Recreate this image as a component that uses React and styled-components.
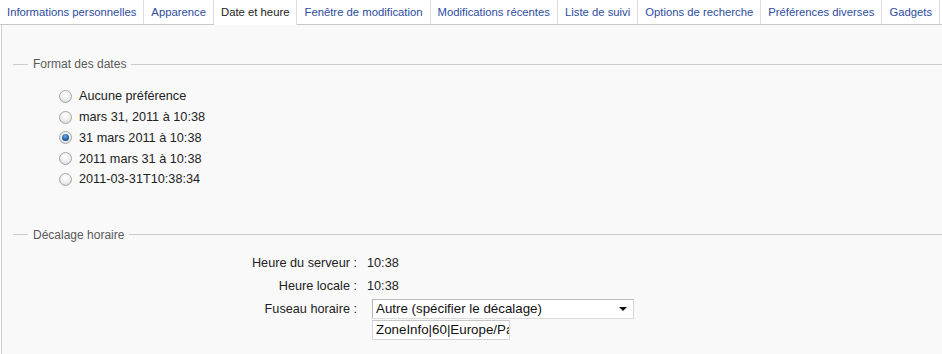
import React from "react";
import styled, { createGlobalStyle } from "styled-components";

const Global = createGlobalStyle`
  html, body { margin: 0; padding: 0; background: #ffffff; }
  body { font-family: "Liberation Sans", Arial, sans-serif; font-size: 12.7px; color: #222; }
`;

const Page = styled.div`
  width: 942px;
  height: 354px;
  overflow: hidden;
  display: flex;
  flex-direction: column;
`;

const TabBar = styled.ul`
  list-style: none;
  margin: 0;
  padding: 0;
  display: flex;
  height: 24px;
  border-bottom: 1px solid #c8c8c8;
  white-space: nowrap;
`;

const Tab = styled.li`
  height: ${(p) => (p.$active ? "25px" : "24px")};
  margin-bottom: ${(p) => (p.$active ? "-1px" : "0")};
  padding: 0 7px ${(p) => (p.$active ? "1px" : "0")};
  display: flex;
  align-items: center;
  background: #ffffff;
  border-right: 1px solid #dcdcdc;
  color: ${(p) => (p.$active ? "#222222" : "#2d4c9e")};
  font-size: 11.3px;
  flex-shrink: 0;
  box-sizing: border-box;
`;

const Panel = styled.div`
  flex: 1;
  margin-left: 1px;
  border-left: 1px solid #cfcfcf;
  background: #f9f9f9;
  padding-top: 32px;
`;

const Legend = styled.div`
  display: flex;
  align-items: center;
  height: 14px;
  color: #5a5a5a;
  font-size: 12px;
  &::before {
    content: "";
    width: 15px;
    margin-left: 11px;
    margin-right: 5px;
    border-top: 1px solid #cccccc;
  }
  &::after {
    content: "";
    flex: 1;
    margin-left: 5px;
    margin-right: -20px;
    border-top: 1px solid #cccccc;
  }
`;

const RadioList = styled.div`
  margin: 15px 0 38px 57px;
  display: flex;
  flex-direction: column;
`;

const RadioRow = styled.label`
  height: 20.75px;
  display: flex;
  align-items: center;
  gap: 7px;
  color: #222;
`;

const RadioDot = styled.span`
  width: 13px;
  height: 13px;
  box-sizing: border-box;
  border-radius: 50%;
  border: 1px solid #a6a6a6;
  background: radial-gradient(circle at 50% 35%, #ffffff 0%, #f1f1f1 45%, #d2d2d2 100%);
  display: flex;
  align-items: center;
  justify-content: center;
  &::after {
    content: "";
    display: ${(p) => (p.$checked ? "block" : "none")};
    width: 7px;
    height: 7px;
    border-radius: 50%;
    background: radial-gradient(circle at 45% 35%, #7fb3e6 0%, #2a6bb3 45%, #0f3a6e 100%);
  }
`;

const OffsetGrid = styled.div`
  margin-top: 9px;
  display: grid;
  grid-template-columns: 355px 280px;
  grid-template-rows: 23.5px 23.5px auto;
  column-gap: 10px;
  align-items: center;
`;

const Label = styled.div`
  text-align: right;
  color: #222;
`;

const Value = styled.div`
  color: #222;
`;

const FieldLabel = styled(Label)`
  align-self: start;
  margin-top: 1px;
  line-height: 20px;
`;

const FieldStack = styled.div`
  align-self: start;
  margin: 1px 0 0 5px;
  display: flex;
  flex-direction: column;
  gap: 1px;
`;

const Select = styled.div`
  width: 262px;
  height: 20px;
  box-sizing: border-box;
  border: 1px solid #b8b8b8;
  border-right-color: #d8d8d8;
  border-bottom-color: #dcdcdc;
  background: #ffffff;
  display: flex;
  align-items: center;
  justify-content: space-between;
  padding: 0 6px 0 3px;
  color: #111;
  font-size: 13.33px;
`;

const Arrow = styled.span`
  width: 0;
  height: 0;
  border-left: 4px solid transparent;
  border-right: 4px solid transparent;
  border-top: 4px solid #111;
  margin-top: 1px;
`;

const TextInput = styled.input`
  width: 138px;
  height: 20px;
  box-sizing: border-box;
  margin: 0;
  border: 1px solid #d6d6d6;
  border-top-color: #c8c8c8;
  background: #ffffff;
  padding: 0 0 0 3px;
  font-family: "Liberation Sans", Arial, sans-serif;
  font-size: 13.33px;
  color: #111;
  outline: none;
`;

const tabs = [
  "Informations personnelles",
  "Apparence",
  "Date et heure",
  "Fenêtre de modification",
  "Modifications récentes",
  "Liste de suivi",
  "Options de recherche",
  "Préférences diverses",
  "Gadgets",
];

const formats = [
  "Aucune préférence",
  "mars 31, 2011 à 10:38",
  "31 mars 2011 à 10:38",
  "2011 mars 31 à 10:38",
  "2011-03-31T10:38:34",
];

export default function App() {
  return (
    <Page>
      <Global />
      <TabBar>
        {tabs.map((t) => (
          <Tab key={t} $active={t === "Date et heure"}>
            {t}
          </Tab>
        ))}
      </TabBar>
      <Panel>
        <Legend>Format des dates</Legend>
        <RadioList>
          {formats.map((f, i) => (
            <RadioRow key={f}>
              <RadioDot $checked={i === 2} />
              {f}
            </RadioRow>
          ))}
        </RadioList>
        <Legend>Décalage horaire</Legend>
        <OffsetGrid>
          <Label>Heure du serveur :</Label>
          <Value>10:38</Value>
          <Label>Heure locale :</Label>
          <Value>10:38</Value>
          <FieldLabel>Fuseau horaire :</FieldLabel>
          <FieldStack>
            <Select>
              <span>Autre (spécifier le décalage)</span>
              <Arrow />
            </Select>
            <TextInput readOnly defaultValue="ZoneInfo|60|Europe/Paris" />
          </FieldStack>
        </OffsetGrid>
      </Panel>
    </Page>
  );
}
